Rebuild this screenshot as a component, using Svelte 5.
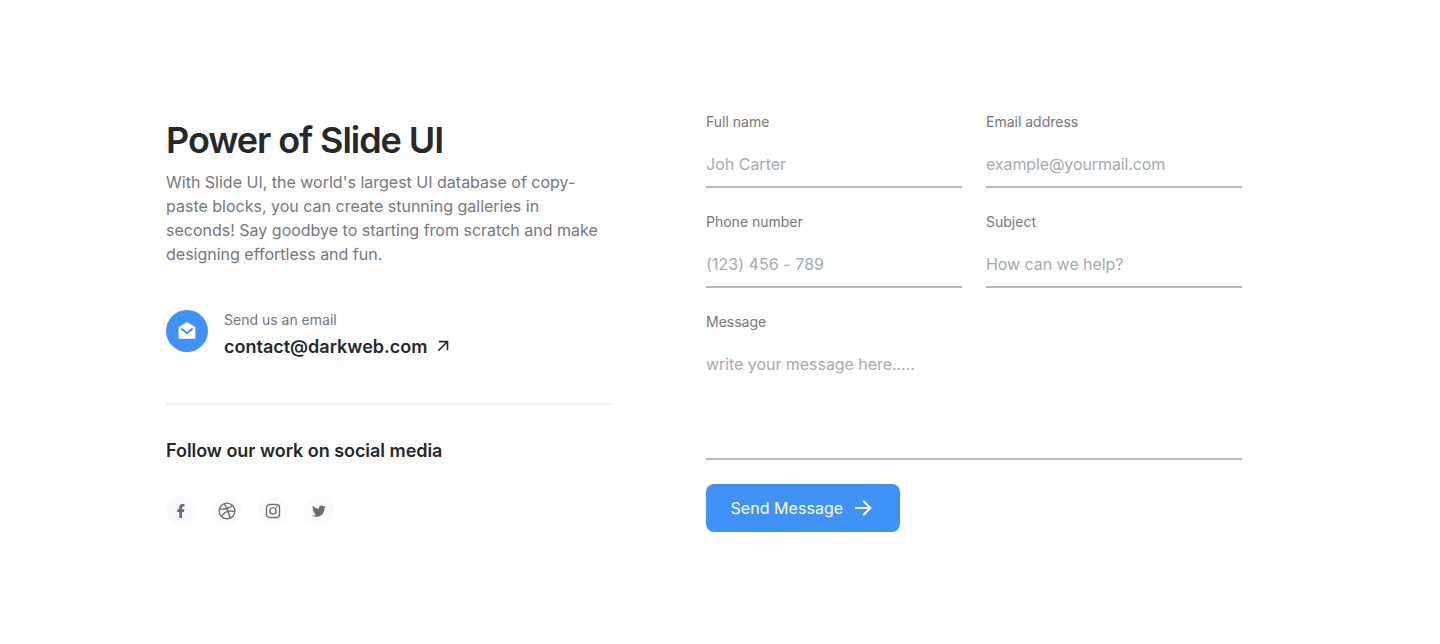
<script>
  const fields = [
    { id: 'name', label: 'Full name', type: 'text', hint: 'Joh Carter' },
    { id: 'email', label: 'Email address', type: 'email', hint: 'example@yourmail.com' },
    { id: 'phone', label: 'Phone number', type: 'tel', hint: '(123) 456 - 789' },
    { id: 'subject', label: 'Subject', type: 'text', hint: 'How can we help?' }
  ];
</script>

<main>
  <section class="info">
    <h1>Power of Slide UI</h1>
    <p class="lead">With Slide UI, the world's largest UI database of copy-<br />paste blocks, you can create stunning galleries in<br />seconds! Say goodbye to starting from scratch and make<br />designing effortless and fun.</p>

    <div class="contact">
      <span class="badge">
        <svg width="20" height="20" viewBox="0 0 20 20">
          <path fill="#fff" d="M1.9 6.2 10 1.4l8.1 4.8v11.2H1.9z" stroke="#fff" stroke-width=".6" stroke-linejoin="round" />
          <path d="m4.3 7.4 5.7 4.8 5.7-4.8" fill="none" stroke="#3f93f7" stroke-width="1.9" />
        </svg>
      </span>
      <div>
        <div class="caption">Send us an email</div>
        <div class="mail">
          <span>contact@darkweb.com</span>
          <svg width="12" height="14" viewBox="0 0 12 14" fill="none" stroke="#25292c" stroke-width="1.6">
            <path d="M1.8 1.6h8.7v8.6M10.3 1.8 1.3 10.8" />
          </svg>
        </div>
      </div>
    </div>

    <hr />
    <h2>Follow our work on social media</h2>
    <div class="social">
      <span><svg width="16" height="16" viewBox="1 .5 23 23" fill="#6d6c7c"><path d="M14 13.5h2.5l1-4H14v-2c0-1.03 0-2 2-2h1.5V2.14C17.174 2.097 15.943 2 14.643 2 11.928 2 10 3.657 10 6.7v2.8H7v4h3V22h4z" /></svg></span>
      <span><svg width="20" height="20" viewBox="0 0 20 20" fill="none" stroke="#6c7074" stroke-width="1.4"><circle cx="10" cy="10" r="7.9" /><path d="M7 2.8c2.7 3.3 4.8 8.3 5.9 14.5M2.2 8.3c5.4.2 10.4-.9 13.3-4M4.5 15.7c2.5-4.4 7.3-6.7 13.3-5" /></svg></span>
      <span><svg width="16" height="16" viewBox="0 0 16 16" fill="none" stroke="#6c7074" stroke-width="1.4"><rect x="1.5" y="1.5" width="13" height="13" rx="3.2" /><circle cx="8" cy="8" r="3.1" /><circle cx="11.8" cy="4.3" r=".8" fill="#6c7074" stroke="none" /></svg></span>
      <span><svg width="16" height="16" viewBox="0.3 0 23.5 23.5" fill="#696e73"><path d="M22.162 5.656a8.384 8.384 0 0 1-2.402.658A4.196 4.196 0 0 0 21.6 4c-.82.488-1.719.83-2.656 1.015a4.182 4.182 0 0 0-7.126 3.814 11.874 11.874 0 0 1-8.62-4.37 4.168 4.168 0 0 0-.566 2.103c0 1.45.738 2.731 1.86 3.481a4.168 4.168 0 0 1-1.894-.523v.052a4.185 4.185 0 0 0 3.355 4.101 4.21 4.21 0 0 1-1.89.072A4.185 4.185 0 0 0 7.97 16.65a8.394 8.394 0 0 1-6.191 1.732 11.83 11.83 0 0 0 6.41 1.88c7.693 0 11.9-6.373 11.9-11.9 0-.18-.005-.362-.013-.54a8.496 8.496 0 0 0 2.087-2.165z" /></svg></span>
    </div>
  </section>

  <form>
    {#each fields as f}
      <div class="field">
        <label for={f.id}>{f.label}</label>
        <input id={f.id} type={f.type} placeholder={f.hint} />
      </div>
    {/each}
    <div class="field wide">
      <label for="message">Message</label>
      <textarea id="message" placeholder="write your message here....."></textarea>
    </div>
    <button type="button">
      Send Message
      <svg width="18" height="18" viewBox="0 0 18 18" fill="none" stroke="#fff" stroke-width="2"><path d="M1 9h15M9.2 1.7 16.4 9l-7.2 7.3" /></svg>
    </button>
  </form>
</main>

<style>
  :global(body) {
    background: #fefefe;
  }
  main, input, textarea, button {
    font-family: Inter, sans-serif;
    letter-spacing: 0;
  }
  main {
    box-sizing: border-box;
    width: 1440px;
    height: 644px;
    padding: 112px 198px 0 166px;
    display: grid;
    grid-template-columns: 445px 536px;
    justify-content: space-between;
    align-items: start;
    color: #25292c;
  }
  h1 {
    margin: 6px 0 8px;
    font-size: 36px;
    line-height: 44px;
    font-weight: 600;
    letter-spacing: -1.06px;
  }
  .lead {
    margin: 0;
    font-size: 16px;
    line-height: 24px;
    color: #75797d;
    white-space: nowrap;
  }
  .contact {
    display: flex;
    gap: 16px;
    margin-top: 44px;
  }
  .badge {
    width: 42px;
    height: 42px;
    border-radius: 50%;
    background: #3f93f7;
    display: grid;
    place-items: center;
  }
  .caption {
    font-size: 14px;
    line-height: 20px;
    color: #75797d;
  }
  .mail {
    display: flex;
    align-items: center;
    gap: 10px;
    margin-top: 3px;
    font-size: 18px;
    line-height: 28px;
    font-weight: 600;
  }
  hr {
    margin: 42px 0 0;
    border: 0;
    height: 2px;
    background: #eff0f1;
  }
  h2 {
    margin: 32px 0 0;
    font-size: 18px;
    line-height: 28px;
    font-weight: 600;
    letter-spacing: -0.04px;
  }
  .social {
    display: flex;
    gap: 16px;
    margin-top: 31px;
  }
  .social span {
    width: 30px;
    height: 30px;
    border-radius: 50%;
    background: #f9fafb;
    display: grid;
    place-items: center;
  }
  form {
    display: grid;
    grid-template-columns: 1fr 1fr;
    gap: 24px;
  }
  .field {
    display: flex;
    flex-direction: column;
  }
  .wide {
    grid-column: 1 / -1;
  }
  label {
    font-size: 14px;
    line-height: 20px;
    color: #75797d;
  }
  input, textarea {
    box-sizing: border-box;
    width: 100%;
    margin: 8px 0 0;
    padding: 12px 0;
    border: 0;
    border-bottom: 2px solid #b6bbbe;
    border-radius: 0;
    outline: 0;
    background: transparent;
    font-size: 16px;
    line-height: 24px;
    color: #25292c;
    resize: none;
  }
  input {
    height: 48px;
    padding: 12px 0 10px;
  }
  textarea {
    height: 120px;
    display: block;
    overflow: hidden;
  }
  ::placeholder {
    color: #a6abae;
    opacity: 1;
    letter-spacing: -0.05px;
  }
  #name::placeholder {
    letter-spacing: 0;
  }
  #email::placeholder {
    letter-spacing: -0.1px;
  }
  #phone::placeholder {
    letter-spacing: 0.05px;
  }
  button {
    width: 194px;
    height: 48px;
    padding: 0 0 0 24.5px;
    border: 0;
    border-radius: 8px;
    background: #3f93f7;
    color: #fff;
    font-size: 16px;
    font-weight: 400;
    letter-spacing: 0.05px;
    display: flex;
    align-items: center;
    gap: 11px;
  }
</style>
